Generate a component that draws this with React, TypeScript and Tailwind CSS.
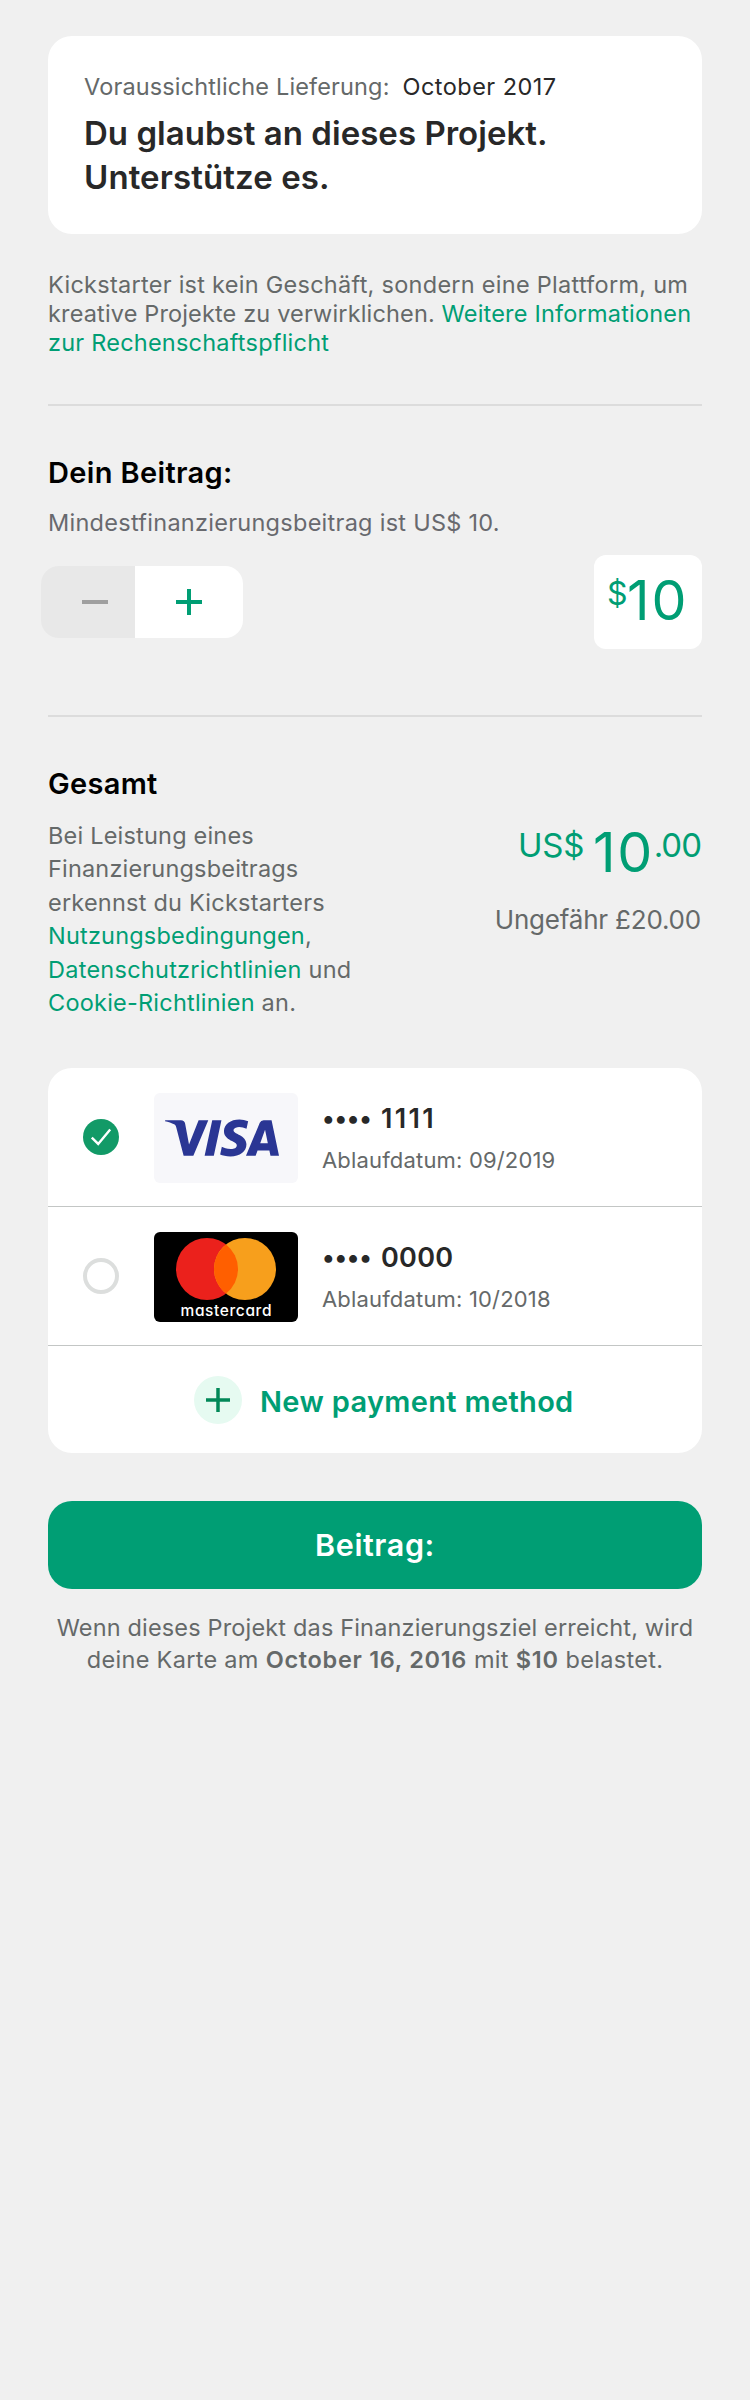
import type { ReactNode } from "react";
import { SiVisa } from "react-icons/si";

function Line({ children, className = "" }: { children: ReactNode; className?: string }) {
  return <span className={`block whitespace-nowrap ${className}`}>{children}</span>;
}

function Divider({ className = "" }: { className?: string }) {
  return <div className={`h-[2px] bg-[#dcdcdc] ${className}`} />;
}

function Radio({ checked }: { checked: boolean }) {
  if (!checked) {
    return <span className="-mt-[2px] size-9 shrink-0 rounded-full border-4 border-[#dcdedd]" />;
  }
  return (
    <svg className="-mt-[2px] size-9 shrink-0" viewBox="0 0 36 36" fill="none">
      <circle cx="18" cy="18" r="18" fill="#129a67" />
      <path d="M8.8 18.6 15.2 24.9 27.2 10.4" stroke="#fff" strokeWidth="2.4" />
    </svg>
  );
}

function VisaLogo() {
  return (
    <div className="flex h-[90px] w-36 shrink-0 items-center justify-center rounded-md bg-[#f7f7fa]">
      <SiVisa className="-ml-[8px] size-[114px] text-[#2a3694]" />
    </div>
  );
}

function MastercardLogo() {
  return (
    <svg className="h-[90px] w-36 shrink-0" viewBox="0 0 144 90">
      <rect width="144" height="90" rx="6" fill="#000" />
      <circle cx="53" cy="37" r="31" fill="#eb211c" />
      <circle cx="91" cy="37" r="31" fill="#f79f1c" />
      <path d="M72 12.5A31 31 0 0 1 72 61.5A31 31 0 0 1 72 12.5Z" fill="#ff5f00" />
      <text
        x="72"
        y="84"
        textAnchor="middle"
        textLength="91"
        fill="#fff"
        className="text-[15.5px] font-medium [font-feature-settings:'cv11']"
      >
        mastercard
      </text>
    </svg>
  );
}

function CardRow({
  checked,
  logo,
  digits,
  digitsClass,
  expiry,
}: {
  checked: boolean;
  logo: ReactNode;
  digits: string;
  digitsClass: string;
  expiry: string;
}) {
  return (
    <div className="flex h-[139px] items-center border-b border-[#c3c6c5] pl-[35px] pt-[2px]">
      <Radio checked={checked} />
      <div className="ml-[35px] flex">{logo}</div>
      <div className="ml-6 pt-px">
        <div className="flex h-[34px] items-center font-semibold leading-[34px] text-[#282828]">
          <span className="-mt-[2px] w-[59px] text-[25px] tracking-[-0.2px]">••••</span>
          <span className={`text-[27px] ${digitsClass}`}>{digits}</span>
        </div>
        <p className="mt-[9px] whitespace-nowrap text-[22px] leading-[30px] tracking-[0.17px] text-[#656969]">
          Ablaufdatum: {expiry}
        </p>
      </div>
    </div>
  );
}

export default function App() {
  return (
    <main className="min-h-[2400px] w-[750px] bg-[#f0f0f0] px-12 pt-9 font-['Inter',sans-serif] text-[23.5px] text-[#656969]">
      <section className="h-[198px] rounded-3xl bg-white px-[36px] pt-[35px]">
        <p className="flex gap-[13px] whitespace-nowrap leading-8">
          <span className="tracking-[0.14px]">Voraussichtliche Lieferung:</span>
          <span className="tracking-[0.45px] text-[#282828]">October 2017</span>
        </p>
        <h1 className="mt-[8px] text-[33px] font-semibold leading-[44px] text-[#282828]">
          <Line className="tracking-[0.03px]">Du glaubst an dieses Projekt.</Line>
          <Line className="tracking-[0.1px]">Unterstütze es.</Line>
        </h1>
      </section>

      <p className="mt-9 leading-[29px]">
        <Line className="tracking-[0.27px]">Kickstarter ist kein Geschäft, sondern eine Plattform, um</Line>
        <Line className="tracking-[0.15px]">
          kreative Projekte zu verwirklichen. <a className="tracking-[0.2px] text-[#009e74]">Weitere Informationen</a>
        </Line>
        <Line className="tracking-[0.22px]">
          <a className="text-[#009e74]">zur Rechenschaftspflicht</a>
        </Line>
      </p>

      <Divider className="mt-[47px]" />

      <section>
        <h2 className="mt-[47px] text-[29px] font-semibold leading-10 tracking-[0.35px] text-black">Dein Beitrag:</h2>
        <p className="mt-[14px] leading-8 tracking-[0.27px] text-[#68696e]">Mindestfinanzierungsbeitrag ist US$ 10.</p>
        <div className="mt-[16px] flex items-center justify-between">
          <div className="-ml-[7px] flex h-[72px] w-[202px] overflow-hidden rounded-[18px]">
            <button className="flex w-[94px] items-center bg-[#e8e8e8] pl-[41px]">
              <span className="h-1 w-[26px] bg-[#9f9f9f]" />
            </button>
            <button className="flex flex-1 items-center justify-center bg-white text-[#009e74]">
              <svg className="size-[26px]" viewBox="0 0 26 26" stroke="currentColor" strokeWidth="4">
                <path d="M0 13H26M13 0V26" />
              </svg>
            </button>
          </div>
          <div className="flex h-[94px] w-[108px] items-start rounded-xl bg-white pl-[13px] pt-[18px] text-[#009e74]">
            <span className="mt-px w-[20px] text-[32px] leading-10">$</span>
            <span className="text-[55.5px] leading-[54px] tracking-[2px]">10</span>
          </div>
        </div>
      </section>

      <Divider className="mt-[66px]" />

      <section>
        <h2 className="mt-[47px] text-[29px] font-semibold leading-10 tracking-[0.3px] text-black">Gesamt</h2>
        <div className="mt-[15px] flex h-[200px] justify-between">
          <p className="leading-[33.4px]">
            <Line className="tracking-[0.2px]">Bei Leistung eines</Line>
            <Line className="tracking-[0.18px]">Finanzierungsbeitrags</Line>
            <Line className="tracking-[0.22px]">erkennst du Kickstarters</Line>
            <Line className="tracking-[0.2px]">
              <a className="text-[#009e74]">Nutzungsbedingungen</a>,
            </Line>
            <Line className="tracking-[0.26px]">
              <a className="text-[#009e74]">Datenschutzrichtlinien</a> und
            </Line>
            <Line className="tracking-[0.22px]">
              <a className="text-[#009e74]">Cookie-Richtlinien</a> an.
            </Line>
          </p>
          <div className="flex flex-col items-end pt-[6px]">
            <div className="flex items-start text-[#009e74]">
              <span className="text-[33px] leading-10 tracking-[-0.3px]">US$</span>
              <span className="ml-[9px] text-[55.5px] leading-[54px] tracking-[1.5px]">10</span>
              <span className="pr-px text-[33px] leading-10 tracking-[-1px]">.00</span>
            </div>
            <p className="mt-[25px] pr-px text-[26px] leading-8 tracking-[-0.2px]">Ungefähr £20.00</p>
          </div>
        </div>
      </section>

      <section className="mt-[49px] overflow-hidden rounded-3xl bg-white">
        <CardRow checked logo={<VisaLogo />} digits="1111" digitsClass="tracking-[2.3px]" expiry="09/2019" />
        <CardRow
          checked={false}
          logo={<MastercardLogo />}
          digits="0000"
          digitsClass="tracking-[0.3px]"
          expiry="10/2018"
        />
        <button className="flex h-[107px] w-full items-center pl-[146px]">
          <span className="flex size-12 items-center justify-center rounded-full bg-[#e6faf1]">
            <svg className="size-6" viewBox="0 0 24 24" stroke="#028858" strokeWidth="3.5">
              <path d="M0 12H24M12 0V24" />
            </svg>
          </span>
          <span className="ml-[18px] mt-[4px] text-[29px] font-semibold tracking-[0.33px] text-[#009e74]">
            New payment method
          </span>
        </button>
      </section>

      <button className="mt-12 flex h-[88px] w-full items-center justify-center rounded-3xl bg-[#009e74] text-[30.5px] font-[560] tracking-[0.6px] text-white">
        Beitrag:
      </button>

      <p className="mt-[23px] text-center leading-8">
        <Line className="tracking-[0.16px]">Wenn dieses Projekt das Finanzierungsziel erreicht, wird</Line>
        <Line className="tracking-[0.3px]">
          deine Karte am <b className="font-semibold tracking-[0.7px]">October 16, 2016</b> mit{" "}
          <b className="font-semibold tracking-[0.7px]">$10</b> belastet.
        </Line>
      </p>
    </main>
  );
}
